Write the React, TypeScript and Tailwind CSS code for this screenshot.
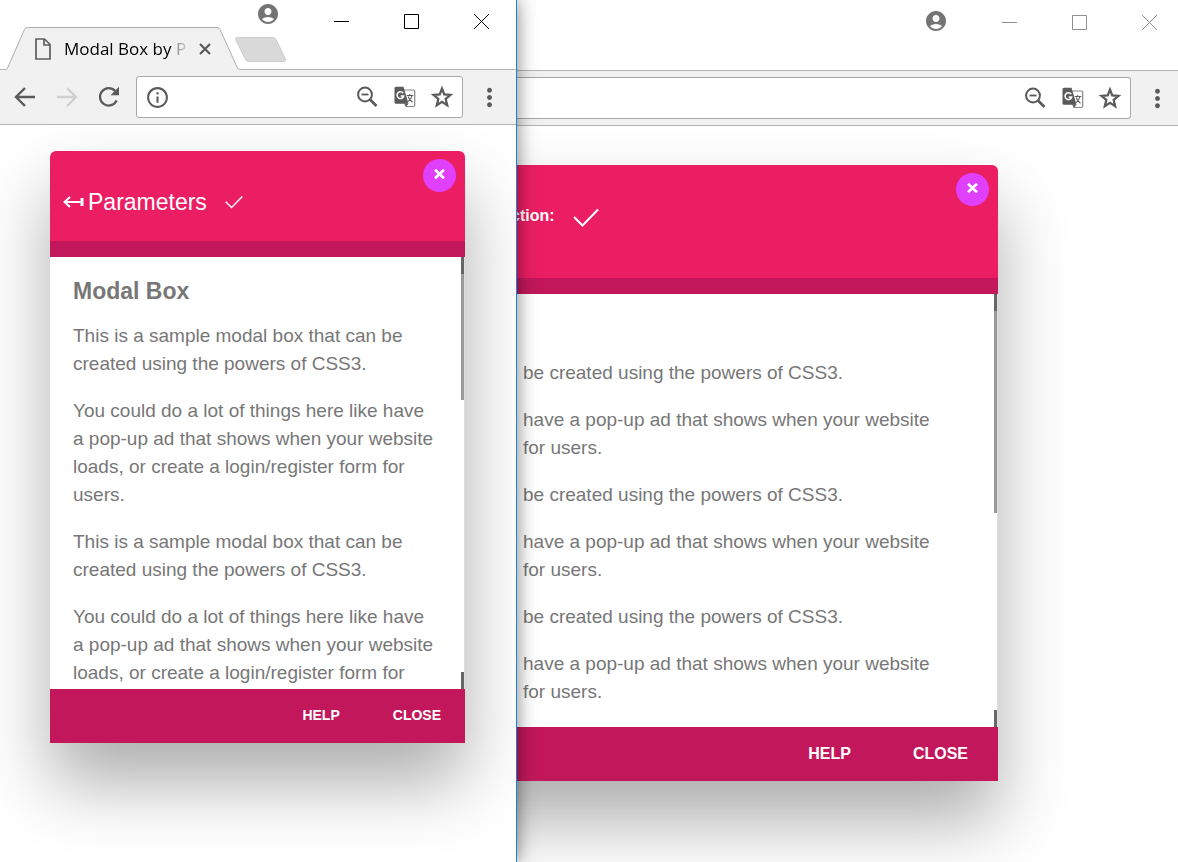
import type { ReactNode } from "react";
import clsx from "clsx";
import { MdAccountCircle, MdInfoOutline, MdMoreVert } from "react-icons/md";

const ABOUT = "This is a sample modal box that can be created using the powers of CSS3.";
const USES =
  "You could do a lot of things here like have a pop-up ad that shows when your website loads, or create a login/register form for";

function BackIcon() {
  return (
    <svg width="22" height="20" viewBox="0 0 22 20" fill="none" stroke="currentColor" strokeWidth="2.4">
      <path d="M21 10H2.5M11 1 2 10l9 9" />
    </svg>
  );
}

function ForwardIcon() {
  return (
    <svg width="22" height="20" viewBox="0 0 22 20" fill="none" stroke="currentColor" strokeWidth="2.4">
      <path d="M1 10h18.5M11 1l9 9-9 9" />
    </svg>
  );
}

function ReloadIcon() {
  return (
    <svg width="22" height="22" viewBox="0 0 22 22">
      <path d="M18.600 14.500A8.700 8.700 0 1 1 17.200 5" fill="none" stroke="currentColor" strokeWidth="2.300" />
      <path d="M21 0.800V9.300H12.500Z" fill="currentColor" />
    </svg>
  );
}

function ZoomOutIcon() {
  return (
    <svg width="22" height="22" viewBox="0 0 22 22" fill="none" stroke="currentColor">
      <circle cx="8" cy="8.500" r="6.900" strokeWidth="2" />
      <path d="M4.500 8.500h7" strokeWidth="1.800" />
      <path d="m13 13.500 6.500 6.500" strokeWidth="2.600" />
    </svg>
  );
}

function TranslateIcon() {
  return (
    <svg width="22" height="22" viewBox="0 0 22 22" fill="none">
      <path d="M10 4h9.500a1.200 1.200 0 0 1 1.200 1.200v14.100a1.200 1.200 0 0 1-1.200 1.200h-7.300L10.500 17" stroke="#858585" strokeWidth="1.200" />
      <path d="M2 .8h7.500l5 17H2A1.500 1.500 0 0 1 .5 16.300v-14A1.500 1.500 0 0 1 2 .8Z" fill="currentColor" />
      <path d="m10.800 17.800 3.700 0-2.500 3Z" fill="currentColor" />
      <path d="M9.200 7.200A3.400 3.400 0 1 0 9.700 10H6.700" stroke="#fff" strokeWidth="1.500" />
      <path d="M12.800 9.500h6.500M15.700 8v1.500M18 9.500c-.6 2.700-2.300 4.800-4 6.200M14 10.500c1 2.300 2.500 4.300 4.500 5.800" stroke="currentColor" strokeWidth="1.100" />
    </svg>
  );
}

function StarIcon() {
  return (
    <svg width="26" height="26" viewBox="0 0 24 24" fill="none" stroke="currentColor" strokeWidth="2.1">
      <path d="m12 4.300 2.100 5.400 5.700.4-4.400 3.700 1.400 5.700L12 16.400l-4.800 3.100 1.400-5.700-4.400-3.700 5.700-.4Z" />
    </svg>
  );
}

function CheckIcon({ large }: { large: boolean }) {
  return (
    <svg
      width={large ? 26 : 18}
      height={large ? 19 : 14}
      viewBox="0 0 26 19"
      fill="none"
      stroke="currentColor"
      strokeWidth="2"
      aria-hidden="true"
    >
      <path d="m1 9 8.500 8.500L25 1.500" />
    </svg>
  );
}

function WindowControls({ active }: { active: boolean }) {
  return (
    <div
      className={clsx(
        "col-start-1 row-start-1 flex items-start gap-[54px] justify-self-end",
        active ? "pt-0.5 pr-[27px]" : "pt-[9px] pr-[21px]",
      )}
    >
      <button aria-label="Profile" className="text-[#747474]">
        <MdAccountCircle size={24} />
      </button>
      <div className={clsx("flex gap-[55px]", active ? "pt-3 text-black" : "pt-1.5 text-[#8f8f8f]")}>
        <button aria-label="Minimize">
          <svg width="15" height="15" viewBox="0 0 15 15" stroke="currentColor">
            <path d="M0 7.500h15" />
          </svg>
        </button>
        <button aria-label="Maximize">
          <svg width="15" height="15" viewBox="0 0 15 15" stroke="currentColor" fill="none">
            <path d="M.5.5h14v14H.5Z" />
          </svg>
        </button>
        <button aria-label="Close window">
          <svg width="15" height="15" viewBox="0 0 15 15" stroke="currentColor">
            <path d="m0 0 15 15M15 0 0 15" />
          </svg>
        </button>
      </div>
    </div>
  );
}

function Tab() {
  return (
    <div className="relative z-10 -mb-px flex h-[43px] w-[236px] items-center pl-[30px]">
      <svg className="absolute inset-0" width="236" height="43" viewBox="0 0 236 43" aria-hidden="true">
        <path
          d="M0 42.500C2 42.500 2.500 41.500 3 40L19.500 2.500Q20.500.5 22.500.5H212Q214 .5 215 2.500L232 40C232.500 41.500 233.500 42.500 236 42.500V43H0Z"
          fill="#f1f1f1"
        />
        <path
          d="M0 42.500C2 42.500 2.500 41.500 3 40L19.500 2.500Q20.500.5 22.500.5H212Q214 .5 215 2.500L232 40C232.500 41.500 233.500 42.500 236 42.500"
          fill="none"
          stroke="#adadad"
        />
      </svg>
      <svg className="relative" width="16" height="22" viewBox="0 0 16 22" fill="none" stroke="#5f5f5f" strokeWidth="1.700" aria-hidden="true">
        <path d="M1 1h8.500L15 6.500V21H1ZM9 1v6h6" />
      </svg>
      <span className="relative ml-[13px] w-[123px] text-[17px] leading-6 whitespace-nowrap text-black [mask-image:linear-gradient(to_right,black_86%,rgba(0,0,0,0.4)_92%,rgba(0,0,0,0.15))]">
        Modal Box by P
      </span>
      <button aria-label="Close tab" className="relative ml-3 text-[#5a5a5a]">
        <svg width="12" height="12" viewBox="0 0 12 12" stroke="currentColor" strokeWidth="2.200">
          <path d="m1 1 10 10M11 1 1 11" />
        </svg>
      </button>
    </div>
  );
}

function Toolbar({ children }: { children?: ReactNode }) {
  return (
    <div className="flex h-[55px] items-center border-b border-[#b4b4b4] bg-[#f1f1f1] text-[#5a5a5a]">
      {children}
    </div>
  );
}

function AddressBar({ info }: { info: boolean }) {
  return (
    <div
      className={clsx(
        "flex h-[42px] min-w-0 flex-1 items-center border border-[#a9a9a9] bg-white pr-[7px]",
        info ? "rounded-[3px] pl-2" : "rounded-r-[3px] border-l-0",
      )}
    >
      {info && (
        <button aria-label="Site information">
          <MdInfoOutline size={25} />
        </button>
      )}
      <input aria-label="Address" className="h-full min-w-0 flex-1 bg-transparent px-2 text-base outline-none" />
      <div className="flex items-center gap-[15px]">
        <button aria-label="Zoom out">
          <ZoomOutIcon />
        </button>
        <button aria-label="Translate this page">
          <TranslateIcon />
        </button>
        <button aria-label="Bookmark this page" className="-ml-0.5">
          <StarIcon />
        </button>
      </div>
    </div>
  );
}

function MenuButton({ className }: { className: string }) {
  return (
    <button aria-label="Menu" className={clsx("ml-3 shrink-0", className)}>
      <MdMoreVert size={29} />
    </button>
  );
}

type ModalProps = { large?: boolean; title: ReactNode; children: ReactNode };

function Modal({ large = false, title, children }: ModalProps) {
  return (
    <section
      className={clsx(
        "rounded-t-[6px] shadow-[0_40px_70px_0_rgba(0,0,0,0.32)]",
        large ? "mr-[180px] -ml-[100px] flex-1" : "mr-[51px] ml-[50px]",
      )}
    >
      <header
        className={clsx(
          "flex items-start justify-between rounded-t-[6px] border-b-16 border-[#c2185b] bg-[#eb1e63] pr-[9px] text-white",
          large ? "h-[129px]" : "h-[106px]",
        )}
      >
        {title}
        <button aria-label="Close modal" className="mt-2 flex size-[33px] justify-center rounded-full bg-[#e040fb] pt-2.5">
          <svg width="11" height="10" viewBox="0 0 11 10" stroke="currentColor" strokeWidth="2.600">
            <path d="M1 .7 10 9.300M10 .7 1 9.300" />
          </svg>
        </button>
      </header>
      <div className={clsx("flex border-r border-[#dedede] bg-white", large ? "h-[433px]" : "h-[432px]")}>
        <div
          className={clsx(
            "flex min-w-0 flex-1 flex-col gap-[19px] overflow-hidden pr-6 text-[19px] leading-7 text-[#777]",
            large ? "pt-[65px] pl-[106px]" : "pt-5 pl-[23px]",
          )}
        >
          {children}
        </div>
        <div className="flex w-[3px] shrink-0 flex-col" aria-hidden="true">
          <div className="h-[17px] bg-[#666]" />
          <div className={clsx("bg-[#999]", large ? "h-[202px]" : "h-[126px]")} />
          <div className="mt-auto h-[17px] bg-[#666]" />
        </div>
      </div>
      <footer
        className={clsx(
          "flex h-[54px] items-center justify-end bg-[#c2185b] font-bold text-white",
          large ? "gap-[62px] pr-[30px] text-base" : "gap-[53px] pr-6 pb-0.5 text-[14px]",
        )}
      >
        <button>HELP</button>
        <button>CLOSE</button>
      </footer>
    </section>
  );
}

function FrontWindow() {
  return (
    <div className="relative z-10 flex w-[517px] shrink-0 flex-col border-r border-[#1883d7] bg-white shadow-[0_0_18px_rgba(0,0,0,0.5)]">
      <div className="grid h-[70px] border-b border-[#b4b4b4] font-['Open_Sans',sans-serif]">
        <div className="col-start-1 row-start-1 flex items-end self-end pl-[5px]">
          <Tab />
          <button aria-label="New tab" className="-ml-1.5 pb-[7px]">
            <svg width="52" height="25" viewBox="0 0 52 25">
              <path d="M2 .5H38Q40 .5 41 2.500L50.500 22Q51.500 24.500 49 24.500H14Q11.500 24.500 10.500 22.500L.8 3Q0 .5 2 .5Z" fill="#d9d9d9" stroke="#cecece" />
            </svg>
          </button>
        </div>
        <WindowControls active />
      </div>
      <Toolbar>
        <div className="flex items-center gap-5 pr-4 pl-3.5">
          <button aria-label="Back">
            <BackIcon />
          </button>
          <button aria-label="Forward" className="text-[#d0d0d0]">
            <ForwardIcon />
          </button>
          <button aria-label="Reload">
            <ReloadIcon />
          </button>
        </div>
        <AddressBar info />
        <MenuButton className="mr-3" />
      </Toolbar>
      <main className="flex-1 overflow-hidden pt-[26px]">
        <Modal
          title={
            <div className="flex items-center pt-9 pl-[13px]">
              <svg width="21" height="12" viewBox="0 0 21 12" fill="none" stroke="currentColor" aria-hidden="true">
                <path d="M19 6H2M7 1 1.500 6 7 11" strokeWidth="2" />
                <path d="M19 2v8" strokeWidth="3" />
              </svg>
              <h1 className="ml-1 text-[23px] leading-[30px]">Parameters</h1>
              <span className="ml-[18px]">
                <CheckIcon large={false} />
              </span>
            </div>
          }
        >
          <h2 className="-mb-0.5 text-[23px] leading-7 font-bold">Modal Box</h2>
          <p>{ABOUT}</p>
          <p>{USES} users.</p>
          <p>{ABOUT}</p>
          <p>{USES}</p>
        </Modal>
      </main>
    </div>
  );
}

function RearWindow() {
  return (
    <div className="flex min-w-0 flex-1 flex-col overflow-hidden bg-white">
      <div className="grid h-[71px] border-b border-[#b4b4b4]">
        <WindowControls active={false} />
      </div>
      <Toolbar>
        <AddressBar info={false} />
        <MenuButton className="mr-1.5" />
      </Toolbar>
      <main className="flex flex-1 items-start overflow-hidden pt-[39px]">
        <Modal
          large
          title={
            <div className="flex items-center pt-[39px] pl-[94px]">
              <h1 className="text-base leading-6 font-bold">ction:</h1>
              <span className="ml-[18px] pt-0.5">
                <CheckIcon large />
              </span>
            </div>
          }
        >
          {[0, 1, 2].map((group) => (
            <div key={group} className="flex flex-col gap-[19px]">
              <p>be created using the powers of CSS3.</p>
              <p>
                have a pop-up ad that shows when your website
                <br />
                for users.
              </p>
            </div>
          ))}
        </Modal>
      </main>
    </div>
  );
}

export default function App() {
  return (
    <div className="flex min-h-screen overflow-hidden bg-white font-['Liberation_Sans',Arial,sans-serif]">
      <FrontWindow />
      <RearWindow />
    </div>
  );
}
